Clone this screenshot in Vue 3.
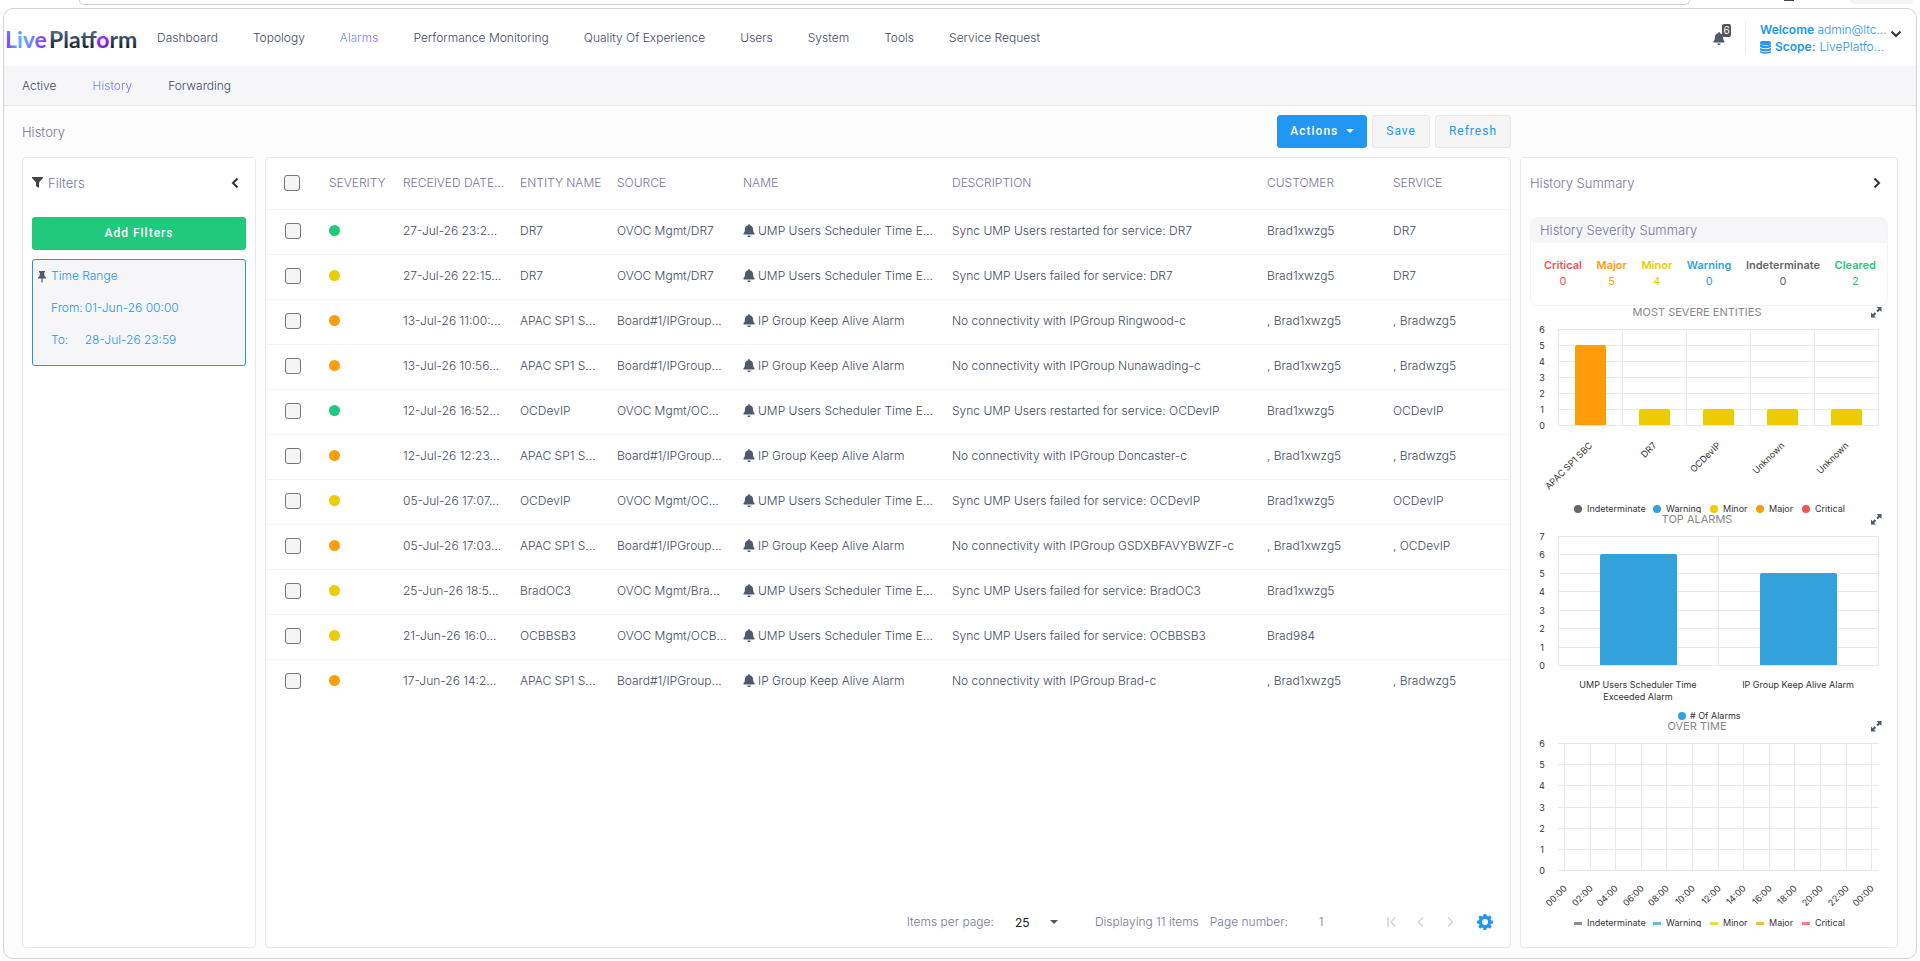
<script setup>
import { ref } from 'vue'

const menu = ['Dashboard', 'Topology', 'Alarms', 'Performance Monitoring', 'Quality Of Experience', 'Users', 'System', 'Tools', 'Service Request']
const tabs = ['Active', 'History', 'Forwarding']

const columns = [
  { label: 'SEVERITY', width: 74 },
  { label: 'RECEIVED DATE...', width: 117 },
  { label: 'ENTITY NAME', width: 97 },
  { label: 'SOURCE', width: 126 },
  { label: 'NAME', width: 209 },
  { label: 'DESCRIPTION', width: 315 },
  { label: 'CUSTOMER', width: 126 },
  { label: 'SERVICE', width: 117 },
]

const ump = 'UMP Users Scheduler Time E...'
const ipg = 'IP Group Keep Alive Alarm'
const rows = [
  ['cleared', '27-Jul-26 23:2...', 'DR7', 'OVOC Mgmt/DR7', ump, 'Sync UMP Users restarted for service: DR7', 'Brad1xwzg5', 'DR7'],
  ['minor', '27-Jul-26 22:15...', 'DR7', 'OVOC Mgmt/DR7', ump, 'Sync UMP Users failed for service: DR7', 'Brad1xwzg5', 'DR7'],
  ['major', '13-Jul-26 11:00:...', 'APAC SP1 S...', 'Board#1/IPGroup...', ipg, 'No connectivity with IPGroup Ringwood-c', ', Brad1xwzg5', ', Bradwzg5'],
  ['major', '13-Jul-26 10:56...', 'APAC SP1 S...', 'Board#1/IPGroup...', ipg, 'No connectivity with IPGroup Nunawading-c', ', Brad1xwzg5', ', Bradwzg5'],
  ['cleared', '12-Jul-26 16:52...', 'OCDevIP', 'OVOC Mgmt/OC...', ump, 'Sync UMP Users restarted for service: OCDevIP', 'Brad1xwzg5', 'OCDevIP'],
  ['major', '12-Jul-26 12:23...', 'APAC SP1 S...', 'Board#1/IPGroup...', ipg, 'No connectivity with IPGroup Doncaster-c', ', Brad1xwzg5', ', Bradwzg5'],
  ['minor', '05-Jul-26 17:07...', 'OCDevIP', 'OVOC Mgmt/OC...', ump, 'Sync UMP Users failed for service: OCDevIP', 'Brad1xwzg5', 'OCDevIP'],
  ['major', '05-Jul-26 17:03...', 'APAC SP1 S...', 'Board#1/IPGroup...', ipg, 'No connectivity with IPGroup GSDXBFAVYBWZF-c', ', Brad1xwzg5', ', OCDevIP'],
  ['minor', '25-Jun-26 18:5...', 'BradOC3', 'OVOC Mgmt/Bra...', ump, 'Sync UMP Users failed for service: BradOC3', 'Brad1xwzg5', ''],
  ['minor', '21-Jun-26 16:0...', 'OCBBSB3', 'OVOC Mgmt/OCB...', ump, 'Sync UMP Users failed for service: OCBBSB3', 'Brad984', ''],
  ['major', '17-Jun-26 14:2...', 'APAC SP1 S...', 'Board#1/IPGroup...', ipg, 'No connectivity with IPGroup Brad-c', ', Brad1xwzg5', ', Bradwzg5'],
]

const summary = [
  { name: 'Critical', count: 0 },
  { name: 'Major', count: 5 },
  { name: 'Minor', count: 4 },
  { name: 'Warning', count: 0 },
  { name: 'Indeterminate', count: 0 },
  { name: 'Cleared', count: 2 },
]

const legend = [
  { name: 'Indeterminate', color: '#666666', x: 48 },
  { name: 'Warning', color: '#33a2dc', x: 127 },
  { name: 'Minor', color: '#eecb00', x: 184 },
  { name: 'Major', color: '#ff9c0a', x: 230 },
  { name: 'Critical', color: '#f05458', x: 276 },
]

const left = 28
const right = 349
const ticks = (max, top, bottom) =>
  Array.from({ length: max + 1 }, (_, v) => ({ v, y: Math.round(bottom - ((bottom - top) * v) / max) + 0.5 }))

const entityTicks = ticks(6, 23, 119)
const entities = [
  { name: 'APAC SP1 SBC', value: 5, color: '#ff9c0a' },
  { name: 'DR7', value: 1, color: '#eecb00' },
  { name: 'OCDevIP', value: 1, color: '#eecb00' },
  { name: 'Unknown', value: 1, color: '#eecb00' },
  { name: 'Unknown', value: 1, color: '#eecb00' },
].map((e, i) => ({ ...e, cx: left + (i + 0.5) * 64, h: e.value * 16 }))

const alarmTicks = ticks(7, 23, 152)
const alarms = [
  { lines: ['UMP Users Scheduler Time', 'Exceeded Alarm'], value: 6 },
  { lines: ['IP Group Keep Alive Alarm'], value: 5 },
].map((a, i) => ({ ...a, cx: left + (i + 0.5) * 160, h: Math.round((a.value * 129) / 7) }))

const timeTicks = ticks(6, 23, 150)
const hours = Array.from({ length: 13 }, (_, i) => ({
  label: String((i * 2) % 24).padStart(2, '0') + ':00',
  x: Math.round(34 + i * 25.6) + 0.5,
}))

const pageSize = ref('25')
const page = ref('1')
const barPath = (cx, w, bottom, h) => {
  const x = Math.round(cx - w / 2)
  return `M${x} ${bottom}V${bottom - h + 2}q0 -2 2 -2H${x + w - 2}q2 0 2 2V${bottom}Z`
}
</script>

<template>
  <div class="screen">
    <div class="strip">
      <div class="omnibox"></div>
      <div class="avatar"></div>
      <div class="chip"></div>
    </div>

    <div class="frame">
      <header class="topbar">
        <svg class="logo" width="134" height="28" viewBox="0 0 134 28" role="img" aria-label="LivePlatform">
          <defs>
            <linearGradient id="live" x1="0" y1="0" x2="1" y2="0.2">
              <stop offset="0" stop-color="#5b9bff" />
              <stop offset="0.22" stop-color="#7a4cf5" />
              <stop offset="0.45" stop-color="#5fb0ff" />
              <stop offset="0.75" stop-color="#6a7bff" />
              <stop offset="1" stop-color="#8c3dfb" />
            </linearGradient>
            <linearGradient id="plat" x1="0" y1="0" x2="0" y2="1">
              <stop offset="0.25" stop-color="#4f6a80" />
              <stop offset="0.85" stop-color="#14202b" />
            </linearGradient>
            <linearGradient id="ring" x1="0" y1="0" x2="1" y2="1">
              <stop offset="0.2" stop-color="#6f8cff" />
              <stop offset="0.6" stop-color="#a21cf5" />
              <stop offset="0.9" stop-color="#1b2030" />
            </linearGradient>
          </defs>
          <text x="1" y="24" class="live" fill="url(#live)">Live</text>
          <text x="45" y="24" class="plat" fill="url(#plat)">Platf<tspan fill="url(#ring)">o</tspan>rm</text>
        </svg>
        <nav class="menu">
          <a v-for="m in menu" :key="m" href="#" :class="{ on: m === 'Alarms' }">{{ m }}</a>
        </nav>
        <button class="bell" aria-label="Notifications">
          <svg width="12" height="13" viewBox="0 0 448 512"><path fill="#4d5a6c" d="M224 512c35 0 64-29 64-64H160c0 35 29 64 64 64zm215-150c-19-20-55-52-55-154 0-77-54-139-127-154V32a32 32 0 1 0-64 0v22C118 69 64 131 64 208c0 102-36 134-55 154-6 7-9 14-9 22 0 16 13 32 32 32h384c19 0 32-16 32-32 0-8-3-15-9-22z" /></svg>
          <span class="badge">6</span>
        </button>
        <button class="user">
          <span class="lines">
            <span><b>Welcome</b> admin@ltc...</span>
            <span class="scope">
              <svg width="11" height="13" viewBox="0 0 11 13" fill="#2196f3"><rect width="11" height="4" rx="2" /><path d="M0 3.500q5.500 2.500 11 0v2.500q-5.500 2.500 -11 0z" /><path d="M0 6.900q5.500 2.500 11 0v2.300q-5.500 2.500 -11 0z" /><path d="M0 10q5.500 2.500 11 0v1.500q-5.500 2.500 -11 0z" /></svg>
              <b>Scope:</b> LivePlatfo...
            </span>
          </span>
          <svg class="down" width="12" height="8" viewBox="0 0 12 8"><path d="M1.500 1.500L6 6l4.500-4.500" fill="none" stroke="#333" stroke-width="2" /></svg>
        </button>
      </header>

      <nav class="tabs">
        <a v-for="t in tabs" :key="t" href="#" :class="{ on: t === 'History' }">{{ t }}</a>
      </nav>

      <main class="layout">
        <h1>History</h1>
        <div class="actions">
          <button class="primary">Actions <i class="caret"></i></button>
          <button>Save</button>
          <button>Refresh</button>
        </div>

        <section class="panel filters">
          <div class="phead">
            <svg width="11" height="11" viewBox="0 0 11 11"><path d="M0 0h11v1L7 5.500V11L4 9V5.500L0 1z" fill="#444" /></svg>
            <h2>Filters</h2>
            <button class="fold" aria-label="Collapse filters"><svg width="8" height="12" viewBox="0 0 8 12"><path d="M6.500 1.500L2 6l4.500 4.500" fill="none" stroke="#333" stroke-width="2" /></svg></button>
          </div>
          <button class="add">Add Filters</button>
          <div class="range">
            <svg width="8" height="12" viewBox="0 0 8 12"><path d="M1 0h6v1.500H6L6.500 5Q8 5.500 8 7.500H4.600V11L4 12 3.400 11V7.500H0Q0 5.500 1.500 5L2 1.500H1z" fill="#4d5a6c" /></svg>
            <dl>
              <dt class="wide">Time Range</dt>
              <dt>From:</dt><dd>01-Jun-26 00:00</dd>
              <dt>To:</dt><dd>28-Jul-26 23:59</dd>
            </dl>
          </div>
        </section>

        <section class="panel list">
          <table>
            <colgroup>
              <col class="pick" />
              <col v-for="c in columns" :key="c.label" :style="{ width: c.width + 'px' }" />
            </colgroup>
            <thead>
              <tr>
                <th><input type="checkbox" aria-label="Select all" /></th>
                <th v-for="c in columns" :key="c.label">{{ c.label }}</th>
              </tr>
            </thead>
            <tbody>
              <tr v-for="(r, i) in rows" :key="i">
                <td><input type="checkbox" :aria-label="'Select row ' + (i + 1)" /></td>
                <td><span class="dot" :class="r[0]"></span></td>
                <td>{{ r[1] }}</td>
                <td>{{ r[2] }}</td>
                <td>{{ r[3] }}</td>
                <td>
                  <span class="alarm">
                    <svg width="12" height="13" viewBox="0 0 448 512"><path fill="#4d5a6c" d="M224 512c35 0 64-29 64-64H160c0 35 29 64 64 64zm215-150c-19-20-55-52-55-154 0-77-54-139-127-154V32a32 32 0 1 0-64 0v22C118 69 64 131 64 208c0 102-36 134-55 154-6 7-9 14-9 22 0 16 13 32 32 32h384c19 0 32-16 32-32 0-8-3-15-9-22z" /></svg>
                    {{ r[4] }}
                  </span>
                </td>
                <td>{{ r[5] }}</td>
                <td>{{ r[6] }}</td>
                <td>{{ r[7] }}</td>
              </tr>
            </tbody>
          </table>

          <footer class="pager">
            <label for="size">Items per page:</label>
            <span class="selectbox">
              <select id="size" v-model="pageSize"><option>25</option><option>50</option></select>
              <i class="caret"></i>
            </span>
            <span>Displaying 11 items</span>
            <label for="page" class="plabel">Page number:</label>
            <input id="page" v-model="page" type="text" />
            <button aria-label="First page"><svg width="10" height="10" viewBox="0 0 10 10"><path d="M1 0v10M8.500 0.500L4 5l4.500 4.500" /></svg></button>
            <button aria-label="Previous page"><svg width="10" height="10" viewBox="0 0 10 10"><path d="M7 0.500L2.500 5L7 9.500" /></svg></button>
            <button aria-label="Next page"><svg width="10" height="10" viewBox="0 0 10 10"><path d="M3 0.500L7.500 5L3 9.500" /></svg></button>
            <button class="gear" aria-label="Settings"><svg width="16" height="16" viewBox="0 0 16 16"><path fill="#2196f3" fill-rule="evenodd" d="M6.600 0h2.800l.4 2 1.300.6L12.900 1.400l1.800 1.900-1.200 1.700.5 1.300 2 .4v2.700l-2 .4-.5 1.200 1.200 1.800-1.800 1.900-1.800-1.200-1.300.5-.4 2H6.600l-.4-2-1.300-.5-1.800 1.200-1.800-1.900 1.200-1.800-.5-1.200-2-.4V6.700l2-.4.5-1.300L1.300 3.300l1.800-1.900 1.800 1.200L6.200 2zM8 5a3 3 0 1 0 0 6a3 3 0 0 0 0-6z" /></svg></button>
          </footer>
        </section>

        <section class="panel stats">
          <div class="phead">
            <h2>History Summary</h2>
            <button class="fold" aria-label="Collapse summary"><svg width="8" height="12" viewBox="0 0 8 12"><path d="M1.500 1.500L6 6l-4.500 4.500" fill="none" stroke="#333" stroke-width="2" /></svg></button>
          </div>

          <div class="card">
            <h3>History Severity Summary</h3>
            <div class="counts">
              <div v-for="s in summary" :key="s.name" :class="'c-' + s.name.toLowerCase()">
                <b>{{ s.name }}</b><span>{{ s.count }}</span>
              </div>
            </div>
          </div>

          <figure v-for="n in 3" :key="n" class="chart">
            <svg viewBox="0 0 358 207">
              <text x="167" y="10" class="title" text-anchor="middle">{{ ['MOST SEVERE ENTITIES', 'TOP ALARMS', 'OVER TIME'][n - 1] }}</text>
              <g transform="translate(341 1)" fill="#4d5a6c">
                <path d="M5.500 0H10.500V5L8.800 3.300 6.800 5.300 5.300 3.800 7.300 1.800zM5 10.500H0V5.500L1.700 7.200 3.700 5.200 5.200 6.700 3.200 8.700z" />
              </g>

              <g v-if="n === 1">
                <path v-for="t in entityTicks" :key="t.v" class="grid" :d="`M${left} ${t.y}H${right}`" />
                <path v-for="k in 6" :key="'v' + k" class="grid" :d="`M${left + (k - 1) * 64 + 0.5} 23V120`" />
                <text v-for="t in entityTicks" :key="'l' + t.v" x="12" :y="t.y + 3" text-anchor="middle">{{ t.v }}</text>
                <template v-for="(e, i) in entities" :key="'b' + i">
                  <path :d="barPath(e.cx, 31, 119, e.h)" :fill="e.color" />
                  <text text-anchor="end" :transform="`translate(${e.cx + 3} 140) rotate(-45)`">{{ e.name }}</text>
                </template>
              </g>

              <g v-if="n === 2">
                <path v-for="t in alarmTicks" :key="t.v" class="grid" :d="`M${left} ${t.y}H${right}`" />
                <path v-for="k in 3" :key="'v' + k" class="grid" :d="`M${left + (k - 1) * 160 + 0.5} 23V153`" />
                <text v-for="t in alarmTicks" :key="'l' + t.v" x="12" :y="t.y + 3" text-anchor="middle">{{ t.v }}</text>
                <template v-for="(a, i) in alarms" :key="'b' + i">
                  <path :d="barPath(a.cx, 77, 152, a.h)" fill="#33a2dc" />
                  <text v-for="(l, j) in a.lines" :key="l" :x="a.cx" :y="175 + j * 12" text-anchor="middle">{{ l }}</text>
                </template>
                <circle cx="152" cy="203" r="4" fill="#33a2dc" />
                <text x="160" y="206">#&nbsp;Of Alarms</text>
              </g>

              <g v-if="n === 3">
                <path v-for="t in timeTicks" :key="t.v" class="grid" :d="`M${left} ${t.y}H${right}`" />
                <text v-for="t in timeTicks" :key="'l' + t.v" x="12" :y="t.y + 3" text-anchor="middle">{{ t.v }}</text>
                <template v-for="(h, i) in hours" :key="'h' + i">
                  <path class="grid" :d="`M${h.x} 23V150`" />
                  <text text-anchor="end" :transform="`translate(${h.x + 3} 169) rotate(-45)`">{{ h.label }}</text>
                </template>
              </g>

              <g v-if="n !== 2">
                <template v-for="l in legend" :key="l.name">
                  <circle v-if="n === 1" :cx="l.x" cy="203" r="4" :fill="l.color" />
                  <rect v-else :x="l.x - 4" y="202" width="8" height="3" :fill="l.color" opacity="0.750" />
                  <text :x="l.x + 9" y="206">{{ l.name }}</text>
                </template>
              </g>
            </svg>
          </figure>
        </section>
      </main>
    </div>
  </div>
</template>

<style>
body {
  margin: 0;
  background: #fff;
}
</style>

<style scoped>
.screen {
  display: flex;
  flex-direction: column;
  min-height: 100vh;
  box-sizing: border-box;
  padding: 0 3px 2px;
  font-family: Inter, "Liberation Sans", sans-serif;
  font-size: 12px;
  font-weight: 300;
  line-height: 16px;
  color: #3f4c5e;
}
.screen *,
.screen *::before {
  box-sizing: border-box;
}
button {
  border: 0;
  padding: 0;
  background: none;
  font: inherit;
  color: inherit;
  cursor: pointer;
}
a {
  color: inherit;
  text-decoration: none;
}
h1, h2, h3, dl, dd, figure {
  margin: 0;
  font-weight: inherit;
}
svg {
  display: block;
  flex: none;
}
.strip {
  display: flex;
  height: 8px;
  overflow: hidden;
  padding: 0 4px 0 76px;
}
.omnibox {
  flex: 1;
  height: 5px;
  border: 1px solid #ccc;
  border-top: 0;
  border-radius: 0 0 16px 16px;
}
.avatar {
  width: 10px;
  height: 1px;
  margin: 0 57px 0 94px;
  background: #445;
}
.chip {
  width: 62px;
  height: 4px;
  border-radius: 0 0 10px 10px;
  background: #f3f3f4;
}
.frame {
  flex: 1;
  display: flex;
  flex-direction: column;
  border: 1px solid #d4d4d6;
  border-radius: 10px;
  overflow: hidden;
  background: #fdfdfd;
}
.topbar {
  display: flex;
  align-items: center;
  height: 57px;
  padding-right: 14px;
  background: #fff;
}
.live,
.plat {
  font: 700 23px Lato, sans-serif;
}
.menu {
  flex: 1;
  display: flex;
  gap: 35px;
  margin-left: 19px;
}
.on {
  background: linear-gradient(90deg, #5f92ff, #8f55fb);
  background-clip: text;
  -webkit-background-clip: text;
  color: transparent;
}
.bell {
  position: relative;
  width: 18px;
  height: 21px;
  margin-bottom: 7px;
  padding-top: 8px;
}
.badge {
  position: absolute;
  top: 0;
  right: 0;
  width: 9px;
  border-radius: 2px;
  background: #555;
  color: #fff;
  font-size: 10px;
  font-weight: 400;
  line-height: 13px;
}
.user {
  display: flex;
  align-items: center;
  gap: 6px;
  margin-left: 14px;
  padding-left: 14px;
  border-left: 1px solid #eee;
  color: #2196f3;
  text-align: left;
}
.user b {
  font-weight: 600;
}
.down {
  margin-bottom: 8px;
}
.lines {
  display: flex;
  flex-direction: column;
  gap: 1px;
  width: 124px;
  padding-top: 2px;
  white-space: nowrap;
}
.scope {
  display: flex;
  align-items: center;
  gap: 4px;
}
.tabs {
  display: flex;
  align-items: center;
  gap: 36px;
  height: 40px;
  padding: 0 18px;
  border-bottom: 1px solid #e6e6e9;
  background: #f6f6f9;
}
.layout {
  flex: 1;
  display: grid;
  grid-template-columns: 234px minmax(0, 1fr) 378px;
  grid-template-rows: 51px 1fr;
  column-gap: 9px;
  padding: 0 18px 10px;
}
h1 {
  align-self: center;
  font-size: 13px;
  color: #77779a;
}
.actions {
  display: flex;
  justify-content: flex-end;
  align-items: center;
  gap: 5px;
}
.stats {
  grid-column: 3;
}
.actions button,
.add {
  height: 33px;
  padding: 0 13px 2px;
  border: 1px solid #e8e8ea;
  border-radius: 3px;
  background: #f5f5f6;
  color: #2196f3;
  font: 400 12px Roboto, sans-serif;
  letter-spacing: 1px;
}
.actions .primary {
  display: flex;
  align-items: center;
  gap: 8px;
  border-color: #2196f3;
  background: #2196f3;
  color: #fff;
  font-weight: 500;
  padding: 0 12px 2px;
}
.caret {
  border: 4px solid transparent;
  border-top-color: currentColor;
  border-bottom: 0;
}
.panel {
  border: 1px solid #e8e8ea;
  border-radius: 4px;
  background: #fff;
  grid-row: 2;
}
.filters,
.stats {
  padding: 0 9px;
}
.phead {
  display: flex;
  align-items: center;
  gap: 5px;
  height: 49px;
  margin-bottom: 10px;
  color: #77779a;
}
h2 {
  font-size: 13px;
}
.fold {
  margin: 0 3px 0 auto;
  padding: 4px;
}
.actions + .filters .add {
  width: 100%;
  border: 0;
  background: #20c97b;
  color: #fff;
  font-weight: 500;
}
.range {
  display: flex;
  gap: 5px;
  margin-top: 9px;
  padding: 8px 5px;
  border: 1px solid #2196f3;
  border-radius: 3px;
  background: #f6f6f9;
  color: #2196f3;
}
dl {
  display: grid;
  grid-template-columns: auto 1fr;
  gap: 16px 2px;
  padding-bottom: 9px;
}
.range svg {
  margin-top: 3px;
}
.wide {
  grid-column: span 2;
}
.list {
  display: flex;
  flex-direction: column;
}
table {
  width: 100%;
  table-layout: fixed;
  border-collapse: collapse;
}
.pick {
  width: 63px;
}
th,
td {
  height: 45px;
  padding: 0 0 2px;
  border-bottom: 1px solid #f4f4f6;
  text-align: left;
  font-weight: inherit;
  white-space: nowrap;
}
th {
  height: 51px;
  padding: 0;
  color: #77779a;
}
tbody tr:last-child td {
  border-bottom: 0;
}
input[type="checkbox"] {
  appearance: none;
  display: block;
  width: 16px;
  height: 16px;
  margin: 0 0 0 19px;
  border: 1px solid #767676;
  border-radius: 3px;
  background: #f5f5f6;
}
th input[type="checkbox"] {
  margin-left: 18px;
}
.dot {
  display: block;
  width: 11px;
  height: 11px;
  border-radius: 50%;
}
.cleared { background: #20c97b; }
.minor { background: #eecb00; }
.major { background: #ff9c0a; }
.alarm {
  display: flex;
  align-items: center;
  gap: 3px;
}
.pager {
  display: flex;
  align-items: center;
  margin-top: auto;
  height: 50px;
  padding-right: 17px;
  justify-content: flex-end;
  color: #77779a;
}
.selectbox {
  display: flex;
  align-items: center;
  width: 43px;
  margin: 0 37px 0 21px;
  color: #555;
}
select {
  appearance: none;
  flex: 1;
  border: 0;
  padding: 0;
  background: none;
  color: #222;
  font: 400 12px Inter, sans-serif;
}
.plabel {
  margin-left: 11px;
}
input[type="text"] {
  width: 14px;
  margin: 0 49px 0 26px;
  padding: 0;
  border: 0;
  background: none;
  text-align: center;
  font: inherit;
  color: inherit;
}
.pager button {
  width: 29px;
  display: flex;
  justify-content: center;
}
.pager button path {
  fill: none;
  stroke: #d4d4d8;
  stroke-width: 1.5;
}
.pager .gear {
  width: 16px;
  margin-left: 13px;
}
.pager .gear path {
  fill: #2196f3;
  stroke: none;
}
.card {
  border: 1px solid #f4f4f6;
  border-radius: 8px;
  overflow: hidden;
}
h3 {
  height: 25px;
  padding-left: 9px;
  background: #f6f6f9;
  color: #77779a;
  font-size: 13px;
  line-height: 25px;
}
.counts {
  display: flex;
  justify-content: space-between;
  padding: 14px 11px 16px 13px;
  font-size: 11px;
}
.counts div {
  display: flex;
  flex-direction: column;
  align-items: center;
}
.counts b {
  font-weight: 600;
}
.counts span {
  font-weight: 400;
}
.c-critical { color: #f05458; }
.c-major { color: #ff9c0a; }
.c-minor { color: #eecb00; }
.c-warning { color: #33a2dc; }
.c-indeterminate { color: #666; }
.c-cleared { color: #20c97b; }
.chart svg {
  width: 100%;
  overflow: hidden;
}
.chart text {
  font: 400 9px Inter, sans-serif;
  fill: #333;
}
.chart .title {
  font-size: 11px;
  fill: #888;
}
.grid {
  fill: none;
  stroke: #e8e8e8;
}
</style>
